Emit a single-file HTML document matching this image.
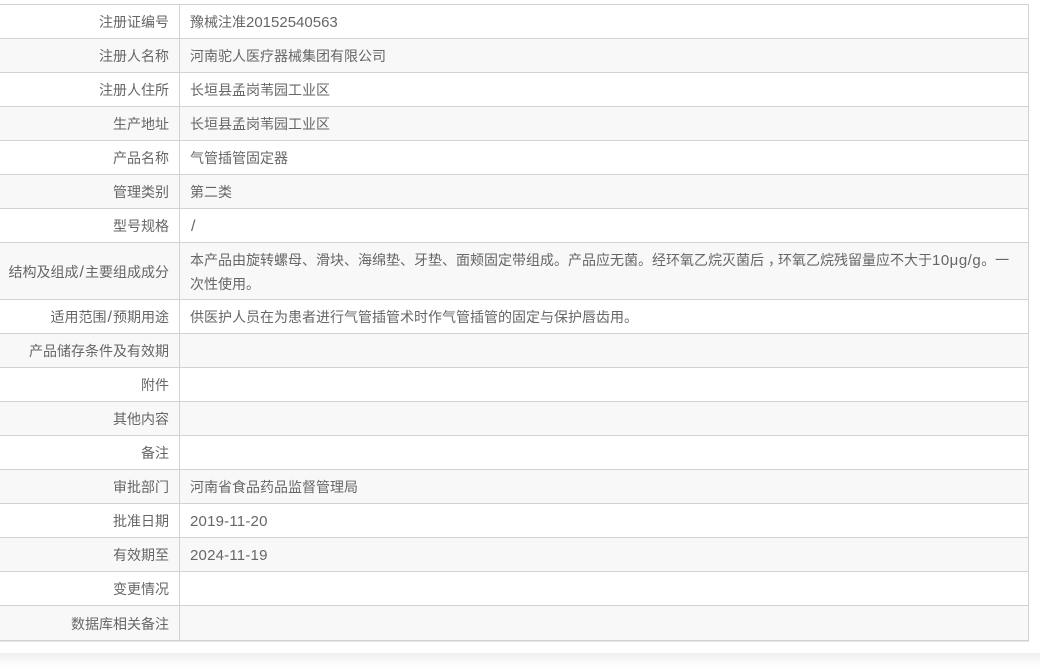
<!DOCTYPE html>
<html lang="zh-CN">
<head>
<meta charset="utf-8">
<title>注册信息</title>
<style>
html,body{margin:0;padding:0;background:#fff;}
body{width:1040px;height:671px;position:relative;overflow:hidden;font-family:"Liberation Sans","Noto Sans CJK SC",sans-serif;font-size:14px;color:#666;}
#shadow{position:absolute;left:0;top:653px;width:1040px;height:18px;background:linear-gradient(#eeeeee,#fbfbfb 55%,#fff);}
#wrap{position:absolute;left:0;top:0;width:1040px;height:653px;background:#fff;}
#under{position:absolute;left:0;top:641px;width:1029px;height:1px;background:#e6e6e6;}
table{position:absolute;left:-2px;top:4px;width:1031px;border-collapse:collapse;table-layout:fixed;}
td{border:1px solid #d2d2d2;padding:1px 10px 0;line-height:24px;box-sizing:border-box;vertical-align:middle;}
td.l{width:181px;text-align:right;white-space:nowrap;padding-left:0;}
tr.e td{background:#f8f8f8;}
tr{height:34px;}
tr.t{height:57px;}
tr.b{height:35px;}
.n{font-size:15px;line-height:1;}
.d{letter-spacing:.2px;}
.s{font-size:16px;margin:0 1px;line-height:1;}
.m{letter-spacing:.5px;}
.c{position:relative;left:4px;line-height:1;}
</style>
</head>
<body>
<div id="shadow"></div>
<div id="wrap">
<table>
<tr><td class="l">注册证编号</td><td>豫械注准<span class="n">20152540563</span></td></tr>
<tr class="e"><td class="l">注册人名称</td><td>河南驼人医疗器械集团有限公司</td></tr>
<tr><td class="l">注册人住所</td><td>长垣县孟岗苇园工业区</td></tr>
<tr class="e"><td class="l">生产地址</td><td>长垣县孟岗苇园工业区</td></tr>
<tr><td class="l">产品名称</td><td>气管插管固定器</td></tr>
<tr class="e"><td class="l">管理类别</td><td>第二类</td></tr>
<tr><td class="l">型号规格</td><td><span class="s">/</span></td></tr>
<tr class="e t"><td class="l">结构及组成<span class="s">/</span>主要组成成分</td><td>本产品由旋转螺母、滑块、海绵垫、牙垫、面颊固定带组成。产品应无菌。经环氧乙烷灭菌后<span class="c">，</span>环氧乙烷残留量应不大于<span class="n m">10μg/g</span>。一次性使用。</td></tr>
<tr><td class="l">适用范围<span class="s">/</span>预期用途</td><td>供医护人员在为患者进行气管插管术时作气管插管的固定与保护唇齿用。</td></tr>
<tr class="e"><td class="l">产品储存条件及有效期</td><td></td></tr>
<tr><td class="l">附件</td><td></td></tr>
<tr class="e"><td class="l">其他内容</td><td></td></tr>
<tr><td class="l">备注</td><td></td></tr>
<tr class="e"><td class="l">审批部门</td><td>河南省食品药品监督管理局</td></tr>
<tr><td class="l">批准日期</td><td><span class="n d">2019-11-20</span></td></tr>
<tr class="e"><td class="l">有效期至</td><td><span class="n d">2024-11-19</span></td></tr>
<tr><td class="l">变更情况</td><td></td></tr>
<tr class="e b"><td class="l">数据库相关备注</td><td></td></tr>
</table>
<div id="under"></div>
</div>
</body>
</html>
